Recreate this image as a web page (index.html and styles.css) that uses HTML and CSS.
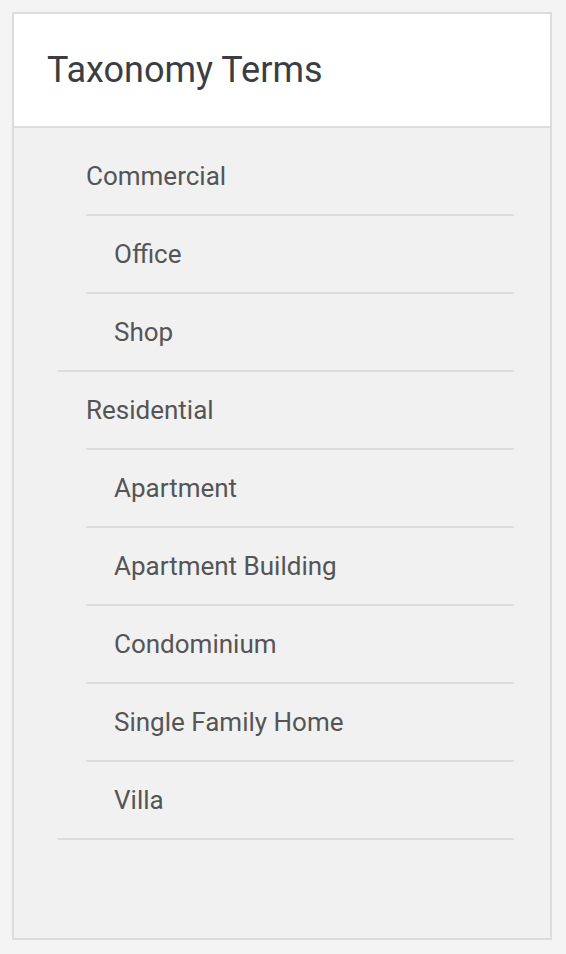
FILE: index.html
```html
<!DOCTYPE html>
<html lang="en">
<head>
<meta charset="utf-8">
<title>Taxonomy Terms</title>
<link rel="stylesheet" href="styles.css">
</head>
<body>
<div class="panel">
  <div class="panel-header">
    <h2 class="panel-title">Taxonomy Terms</h2>
  </div>
  <div class="panel-body">
    <ul class="terms">
      <li class="term">
        <span class="term-label">Commercial</span>
        <ul class="children">
          <li class="child"><span class="term-label">Office</span></li>
          <li class="child"><span class="term-label">Shop</span></li>
        </ul>
      </li>
      <li class="term">
        <span class="term-label">Residential</span>
        <ul class="children">
          <li class="child"><span class="term-label">Apartment</span></li>
          <li class="child"><span class="term-label">Apartment Building</span></li>
          <li class="child"><span class="term-label">Condominium</span></li>
          <li class="child"><span class="term-label">Single Family Home</span></li>
          <li class="child"><span class="term-label">Villa</span></li>
        </ul>
      </li>
    </ul>
  </div>
</div>
</body>
</html>
```

FILE: styles.css
```css
html, body {
  margin: 0;
  padding: 0;
  background: #f4f4f4;
}
body {
  padding: 12px;
  font-family: Roboto, "Liberation Sans", Arial, sans-serif;
}
.panel {
  width: 540px;
  height: 928px;
  box-sizing: border-box;
  border: 2px solid #dcdcdc;
  background: #f1f1f1;
  display: flex;
  flex-direction: column;
}
.panel-header {
  height: 112px;
  background: #ffffff;
  border-bottom: 2px solid #dcdcdc;
  display: flex;
  align-items: center;
  padding-left: 33px;
}
.panel-title {
  margin: 0;
  font-size: 36px;
  font-weight: 400;
  color: #3a3d41;
  line-height: 1;
}
.panel-body {
  padding: 10px 36px 0 44px;
}
.terms, .children {
  list-style: none;
  margin: 0;
  padding: 0;
}
.term {
  border-bottom: 2px solid #dcdcdc;
}
.term > .term-label {
  padding-left: 28px;
}
.children {
  margin-left: 28px;
}
.child {
  border-top: 2px solid #dcdcdc;
}
.child > .term-label {
  padding-left: 28px;
}
.term-label {
  display: block;
  height: 76px;
  line-height: 76px;
  font-size: 26px;
  color: #555555;
}
```
